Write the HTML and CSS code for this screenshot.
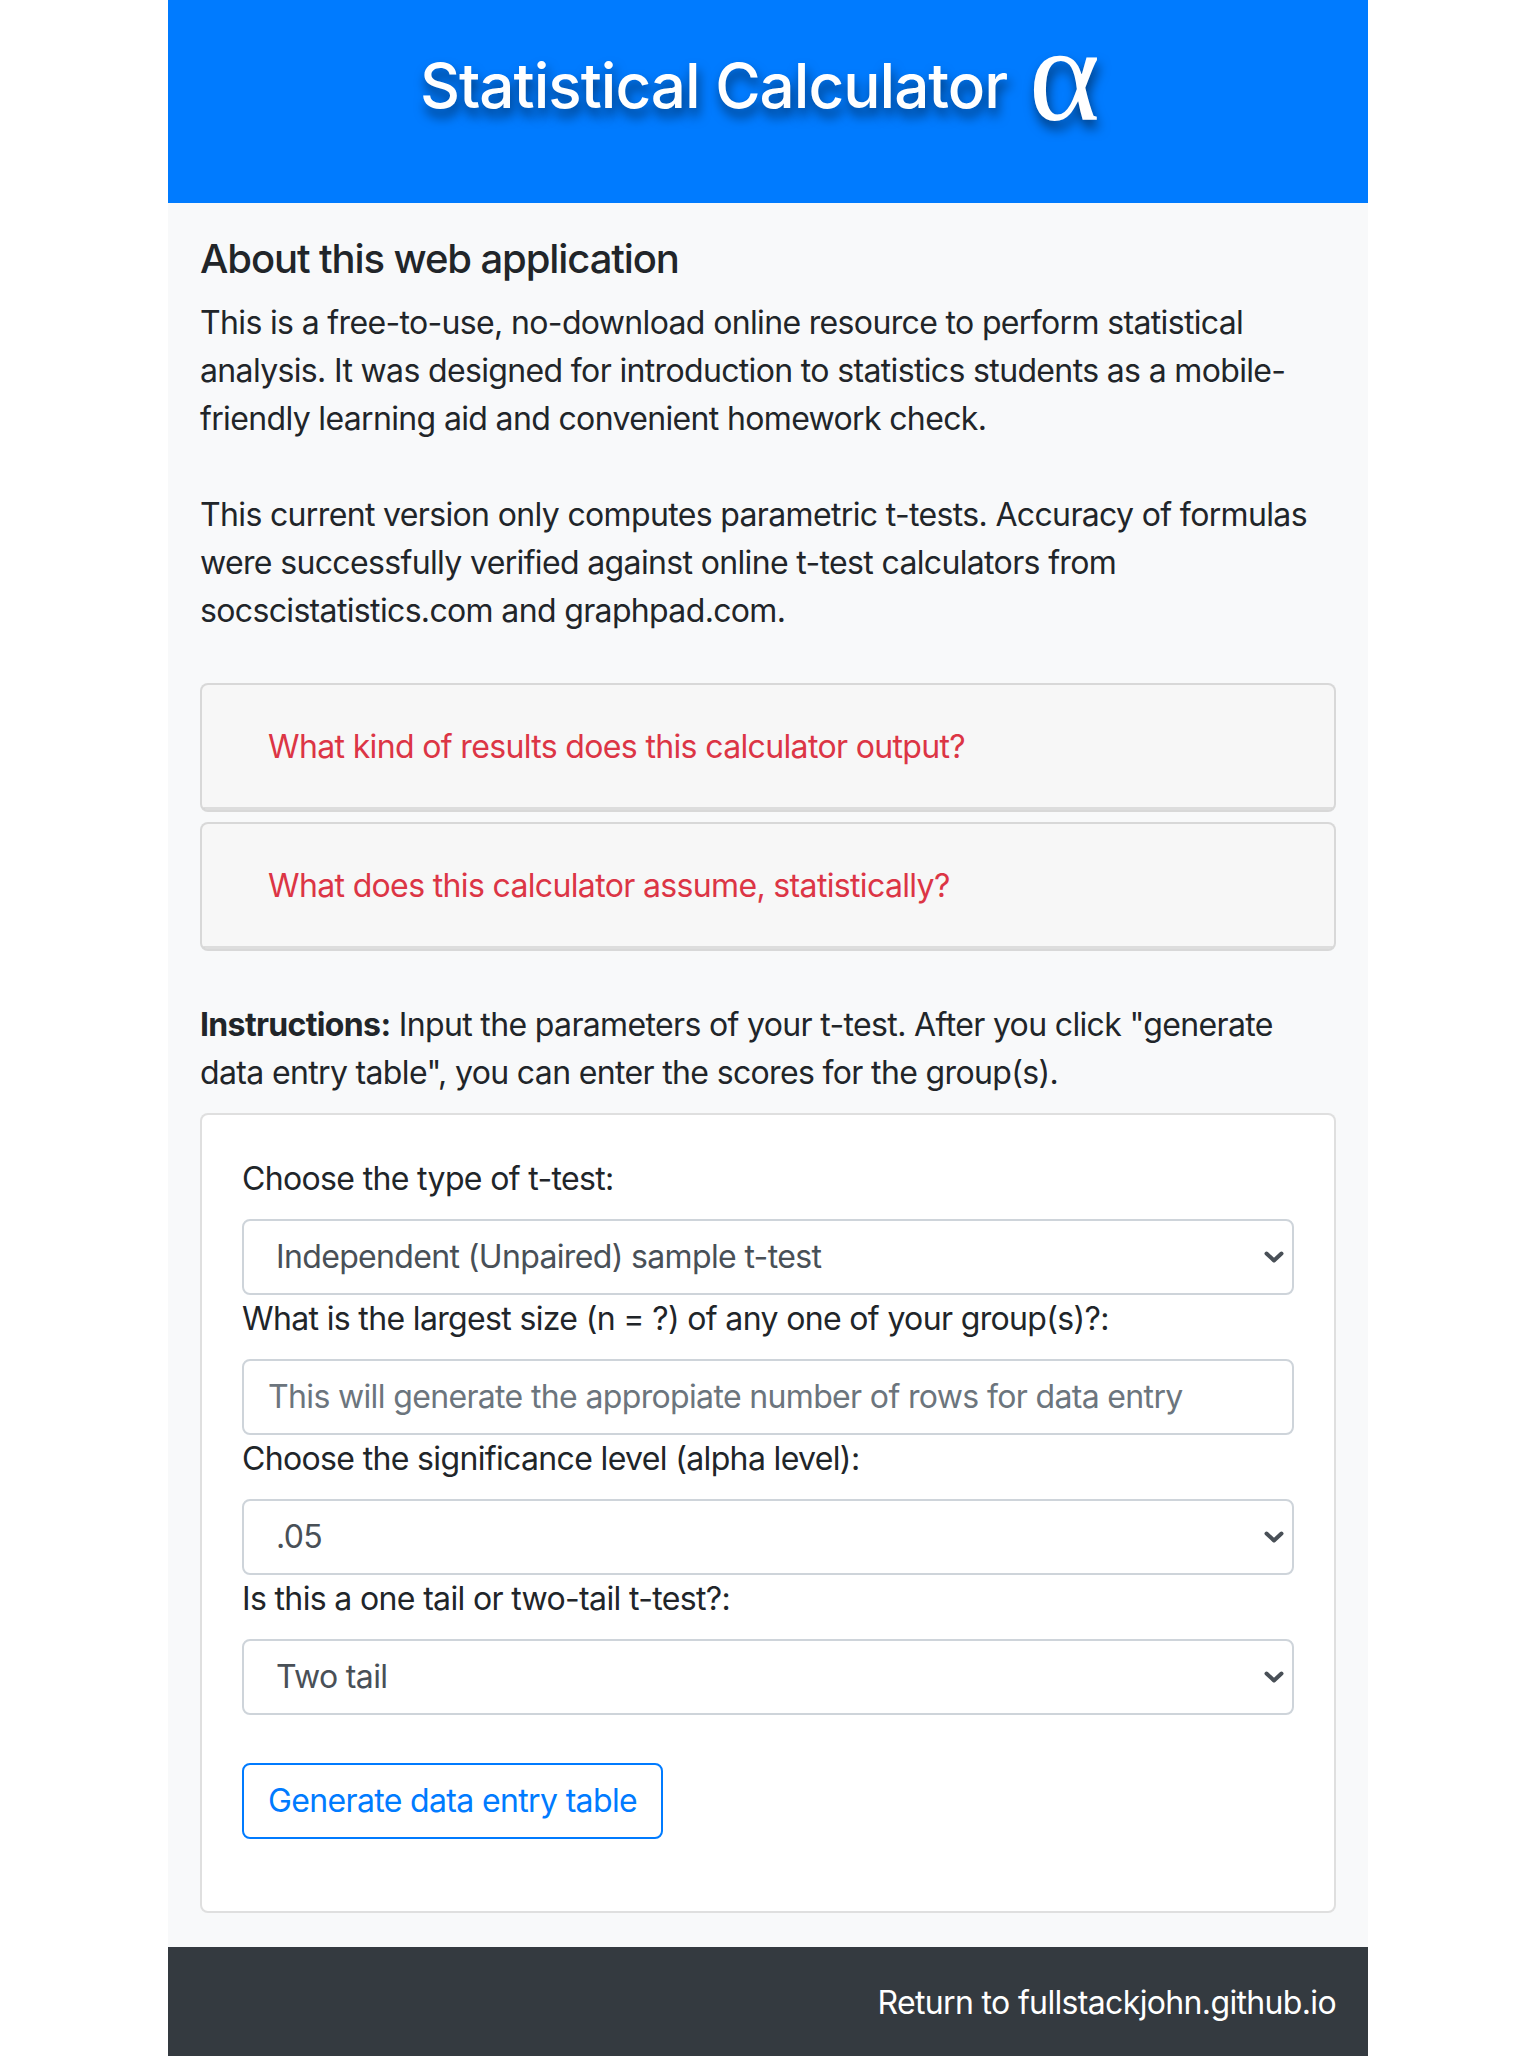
FILE: index.html
```html
<!DOCTYPE html>
<html lang="en">
<head>
<meta charset="utf-8">
<title>Statistical Calculator</title>
<link rel="stylesheet" href="styles.css">
</head>
<body>
<div class="page">
  <header class="hero">
    <h1 class="hero-title">Statistical Calculator <span class="alpha">α</span></h1>
  </header>
  <main class="content">
    <h5 class="about-title">About this web application</h5>
    <p class="about-text">This is a free-to-use, no-download online resource to perform statistical analysis. It was designed for introduction to statistics students as a mobile-friendly learning aid and convenient homework check.<br><br>This current version only computes parametric t-tests. Accuracy of formulas were successfully verified against online t-test calculators from socscistatistics.com and graphpad.com.</p>

    <div class="accordion">
      <div class="acc-card">
        <div class="acc-header"><button class="acc-btn" type="button">What kind of results does this calculator output?</button></div>
      </div>
      <div class="acc-card">
        <div class="acc-header"><button class="acc-btn" type="button">What does this calculator assume, statistically?</button></div>
      </div>
    </div>

    <p class="instructions"><strong class="strong">Instructions:</strong> Input the parameters of your t-test. After you click "generate data entry table", you can enter the scores for the group(s).</p>

    <div class="form-card">
      <label class="field-label">Choose the type of t-test:</label>
      <div class="select">Independent (Unpaired) sample t-test</div>
      <label class="field-label">What is the largest size (n = ?) of any one of your group(s)?:</label>
      <div class="input placeholder">This will generate the appropiate number of rows for data entry</div>
      <label class="field-label">Choose the significance level (alpha level):</label>
      <div class="select">.05</div>
      <label class="field-label">Is this a one tail or two-tail t-test?:</label>
      <div class="select">Two tail</div>
      <button class="btn-outline" type="button">Generate data entry table</button>
    </div>
  </main>
  <footer class="footer">
    <span class="footer-link">Return to fullstackjohn.github.io</span>
  </footer>
</div>
</body>
</html>
```
FILE: styles.css
```css
* { box-sizing: border-box; }
html, body { margin: 0; padding: 0; background: #ffffff; }
body {
  font-family: Inter, "Noto Sans", "Liberation Sans", sans-serif;
  font-size: 32px;
  line-height: 48px;
  letter-spacing: -0.65px;
  color: #212529;
}
.page {
  width: 1200px;
  margin: 0 auto;
  background: #f8f9fa;
}
.hero {
  background: #007bff;
  height: 203px;
  padding-top: 48px;
  text-align: center;
}
.hero-title {
  margin: 0;
  font-size: 62px;
  line-height: 76px;
  font-weight: 500;
  letter-spacing: -1px;
  color: #ffffff;
  text-shadow: 2px 8px 12px rgba(0, 0, 0, 0.55);
}
.alpha {
  display: inline-block;
  margin-left: 6px;
  margin-right: 16px;
  font-family: "Liberation Serif", "DejaVu Serif", serif;
  font-size: 136px;
  font-weight: 400;
  letter-spacing: 0;
  line-height: 0;
  vertical-align: -12px;
}
.content {
  padding: 32px 32px 34px;
}
.about-title {
  margin: 0 0 16px;
  font-size: 40px;
  line-height: 48px;
  font-weight: 500;
  letter-spacing: -1.1px;
}
.about-text {
  margin: 0 0 48px;
}
.accordion {
  display: flex;
  flex-direction: column;
  gap: 10px;
  margin-bottom: 50px;
}
.acc-card {
  border: 2px solid rgba(0, 0, 0, 0.125);
  border-radius: 8px;
  background: #f7f7f7;
  overflow: hidden;
}
.acc-header {
  padding: 24px 40px;
  border-bottom: 3px solid rgba(0, 0, 0, 0.1);
  height: 125px;
}
.acc-btn {
  font: inherit;
  letter-spacing: inherit;
  color: #dc3545;
  background: none;
  border: 2px solid transparent;
  padding: 12px 24px;
  cursor: pointer;
}
.instructions {
  margin: 0 0 16px;
}
.strong {
  font-weight: 700;
}
.form-card {
  background: #ffffff;
  border: 2px solid rgba(0, 0, 0, 0.125);
  border-radius: 8px;
  padding: 40px 40px 40px;
  display: flex;
  flex-direction: column;
  align-items: flex-start;
}
.field-label {
  display: block;
  margin-bottom: 16px;
}
.select, .input {
  width: 100%;
  height: 76px;
  border: 2px solid #ced4da;
  border-radius: 8px;
  background: #ffffff;
  color: #495057;
  display: flex;
  align-items: center;
}
.select {
  padding: 0 60px 0 32px;
  background-image: url("data:image/svg+xml,%3Csvg xmlns='http://www.w3.org/2000/svg' width='20' height='12' viewBox='0 0 20 12'%3E%3Cpath d='M2.5 2.5l7.5 7 7.5-7' fill='none' stroke='%23495057' stroke-width='4' stroke-linecap='round' stroke-linejoin='round'/%3E%3C/svg%3E");
  background-repeat: no-repeat;
  background-position: right 8px center;
  background-size: 20px 12px;
}
.input {
  padding: 0 24px;
}
.placeholder { color: #6c757d; }
.btn-outline {
  font: inherit;
  letter-spacing: inherit;
  margin-top: 48px;
  margin-bottom: 32px;
  color: #007bff;
  background: transparent;
  border: 2px solid #007bff;
  border-radius: 8px;
  padding: 12px 24px;
  cursor: pointer;
}
.footer {
  background: #343a40;
  padding: 32px;
  text-align: right;
  height: 112px;
}
.footer-link {
  color: #ffffff;
}
```
